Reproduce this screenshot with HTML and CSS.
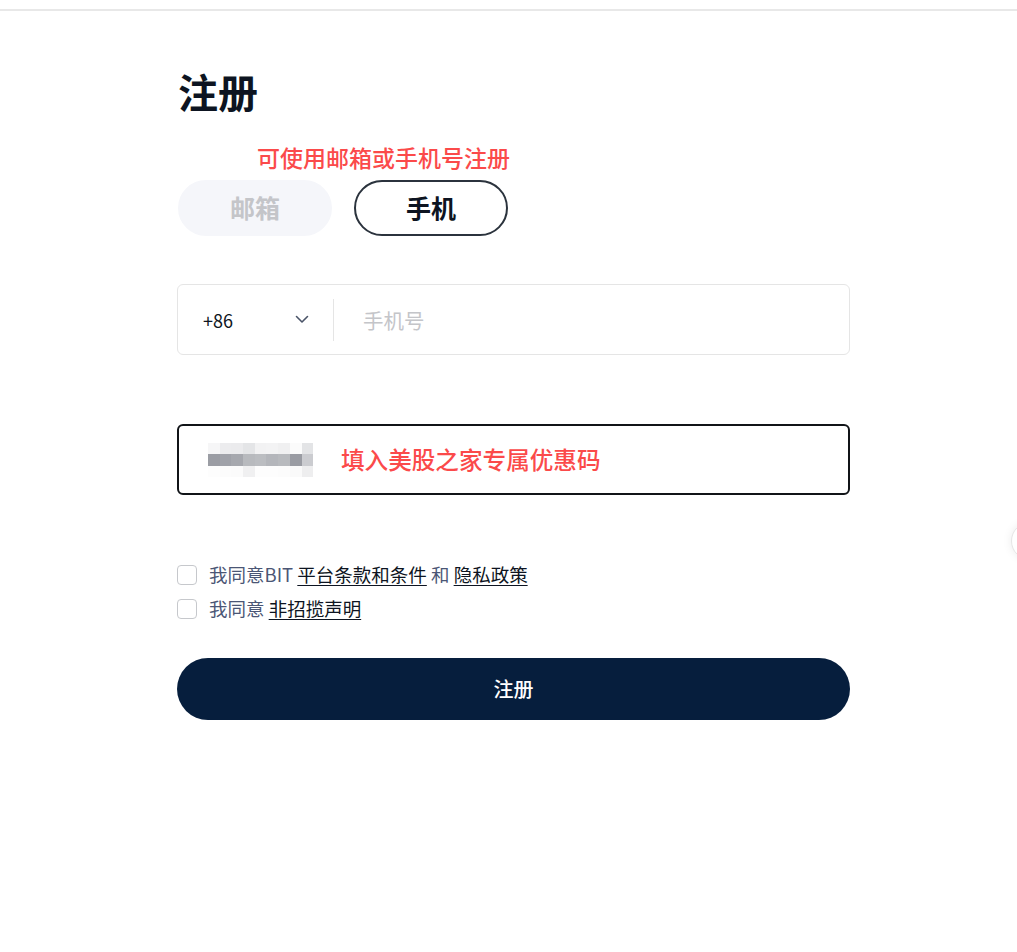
FILE: index.html
```html
<!DOCTYPE html>
<html lang="zh-CN">
<head>
<meta charset="utf-8">
<title>注册</title>
<link rel="stylesheet" href="styles.css">
</head>
<body>
<div class="topbar"></div>
<main class="main">
  <h1 class="title">注册</h1>
  <div class="hint">可使用邮箱或手机号注册</div>
  <div class="tabs">
    <div class="tab tab-off">邮箱</div>
    <div class="tab tab-on">手机</div>
  </div>
  <div class="field phone">
    <div class="country">
      <span class="code">+86</span>
      <svg class="chev" width="14" height="9" viewBox="0 0 14 9"><path d="M1.5 1.5 L7 7 L12.5 1.5" fill="none" stroke="#4a5468" stroke-width="1.6" stroke-linecap="round" stroke-linejoin="round"/></svg>
    </div>
    <div class="sep"></div>
    <div class="placeholder">手机号</div>
  </div>
  <div class="field promo">
    <div class="mosaic">
      <span></span><span></span><span></span><span></span><span></span><span></span><span></span><span></span><span></span>
      <span></span><span></span><span></span><span></span><span></span><span></span><span></span><span></span><span></span>
      <span></span><span></span><span></span><span></span><span></span><span></span><span></span><span></span><span></span>
    </div>
    <div class="promo-text">填入美股之家专属优惠码</div>
  </div>
  <div class="agree">
    <label class="row"><span class="box"></span><span>我同意BIT <a class="link">平台条款和条件</a> 和 <a class="link">隐私政策</a></span></label>
    <label class="row"><span class="box"></span><span>我同意 <a class="link">非招揽声明</a></span></label>
  </div>
  <button class="submit">注册</button>
</main>
<div class="float-btn"></div>
</body>
</html>
```
FILE: styles.css
```css
* { box-sizing: border-box; }
html, body { margin: 0; padding: 0; background: #fff; }
body {
  font-family: "Noto Sans CJK SC", "Noto Sans", sans-serif;
  color: #0d1421;
  overflow: hidden;
  height: 952px;
  position: relative;
}
.topbar {
  height: 11px;
  border-bottom: 2px solid #e8e8e8;
}
.main {
  padding-left: 177px;
  width: 673px;
  box-sizing: content-box;
}
.title {
  margin: 56px 0 0 1px;
  font-size: 40px;
  line-height: 48px;
  font-weight: 700;
  color: #0d1421;
}
.hint {
  margin: 27px 0 0 80px;
  font-size: 23px;
  line-height: 30px;
  font-weight: 500;
  color: #fb4a4a;
}
.tabs {
  display: flex;
  gap: 22px;
  margin-top: 8px;
}
.tab {
  width: 154px;
  height: 56px;
  border-radius: 28px;
  display: flex;
  align-items: center;
  justify-content: center;
  font-size: 25px;
  line-height: 30px;
  font-weight: 700;
  border: 2px solid transparent;
  padding-bottom: 3px;
}
.tab-off {
  margin-left: 1px;
  background: #f5f6fa;
  color: #c4c5c9;
  border-color: #f5f6fa;
}
.tab-on {
  border-color: #2b333d;
  color: #0d1421;
}
.field {
  height: 71px;
  border-radius: 6px;
  display: flex;
  align-items: center;
}
.phone {
  margin-top: 48px;
  border: 1px solid #e5e5e5;
}
.country {
  width: 155px;
  padding: 0 24px 0 25px;
  display: flex;
  align-items: center;
  justify-content: space-between;
}
.code {
  font-size: 18px;
  color: #0d1421;
}
.chev { display: block; }
.sep {
  width: 1px;
  height: 42px;
  background: #e5e5e5;
}
.placeholder {
  margin-left: 29px;
  font-size: 20.5px;
  color: #c4c5c9;
}
.promo {
  margin-top: 69px;
  border: 2.5px solid #111418;
  padding-left: 29px;
}
.mosaic {
  display: grid;
  grid-template-columns: repeat(9, 11.7px);
  grid-template-rows: 11px 12px 11px;
  width: 105px;
  margin-top: 1px;
}
.mosaic span:nth-child(1) { background: #f6f6f7; }
.mosaic span:nth-child(2) { background: #ececee; }
.mosaic span:nth-child(3) { background: #ebebed; }
.mosaic span:nth-child(4) { background: #e4e5e7; }
.mosaic span:nth-child(5) { background: #f2f2f3; }
.mosaic span:nth-child(6) { background: #f3f3f4; }
.mosaic span:nth-child(7) { background: #f0f0f1; }
.mosaic span:nth-child(8) { background: #fbfbfb; }
.mosaic span:nth-child(9) { background: #e3e4e6; }
.mosaic span:nth-child(10) { background: #9b9da4; }
.mosaic span:nth-child(11) { background: #a0a2a9; }
.mosaic span:nth-child(12) { background: #a6a8ae; }
.mosaic span:nth-child(13) { background: #b8babe; }
.mosaic span:nth-child(14) { background: #bbbdc1; }
.mosaic span:nth-child(15) { background: #b4b6bb; }
.mosaic span:nth-child(16) { background: #b8babe; }
.mosaic span:nth-child(17) { background: #9a9ca3; }
.mosaic span:nth-child(18) { background: #cbccd0; }
.mosaic span:nth-child(19) { background: #fdfdfd; }
.mosaic span:nth-child(20) { background: #fcfcfc; }
.mosaic span:nth-child(21) { background: #fbfbfb; }
.mosaic span:nth-child(22) { background: #f0f0f1; }
.mosaic span:nth-child(23) { background: #fdfdfd; }
.mosaic span:nth-child(24) { background: #fdfdfd; }
.mosaic span:nth-child(25) { background: #fcfcfc; }
.mosaic span:nth-child(26) { background: #fafafa; }
.mosaic span:nth-child(27) { background: #eeeeef; }
.promo-text {
  margin-left: 28px;
  font-size: 23.6px;
  line-height: 30px;
  font-weight: 500;
  color: #fb4a4a;
  padding-bottom: 2px;
}
.agree {
  margin-top: 63px;
}
.row {
  display: flex;
  align-items: center;
  gap: 12px;
  height: 34px;
  font-size: 18.5px;
  color: #4b5675;
}
.row > span:last-child { padding-bottom: 2px; }
.box {
  width: 20px;
  height: 20px;
  border: 1.5px solid #c6c8cc;
  border-radius: 4px;
  background: #fff;
}
.link {
  color: #0d1421;
  text-decoration: underline;
  text-underline-offset: 3px;
  text-decoration-thickness: 1px;
}
.submit {
  display: flex;
  align-items: center;
  justify-content: center;
  margin-top: 32px;
  width: 673px;
  height: 62px;
  border: none;
  border-radius: 31px;
  background: #061e3d;
  color: #fff;
  font-family: "Noto Sans CJK SC", "Noto Sans", sans-serif;
  font-size: 20px;
  font-weight: 500;
  padding-bottom: 2px;
}
.float-btn {
  position: absolute;
  left: 1011px;
  top: 522px;
  width: 38px;
  height: 38px;
  border-radius: 50%;
  background: #fff;
  border: 1px solid #e6e6e6;
  box-shadow: 0 0 10px rgba(0,0,0,0.08);
}
```
